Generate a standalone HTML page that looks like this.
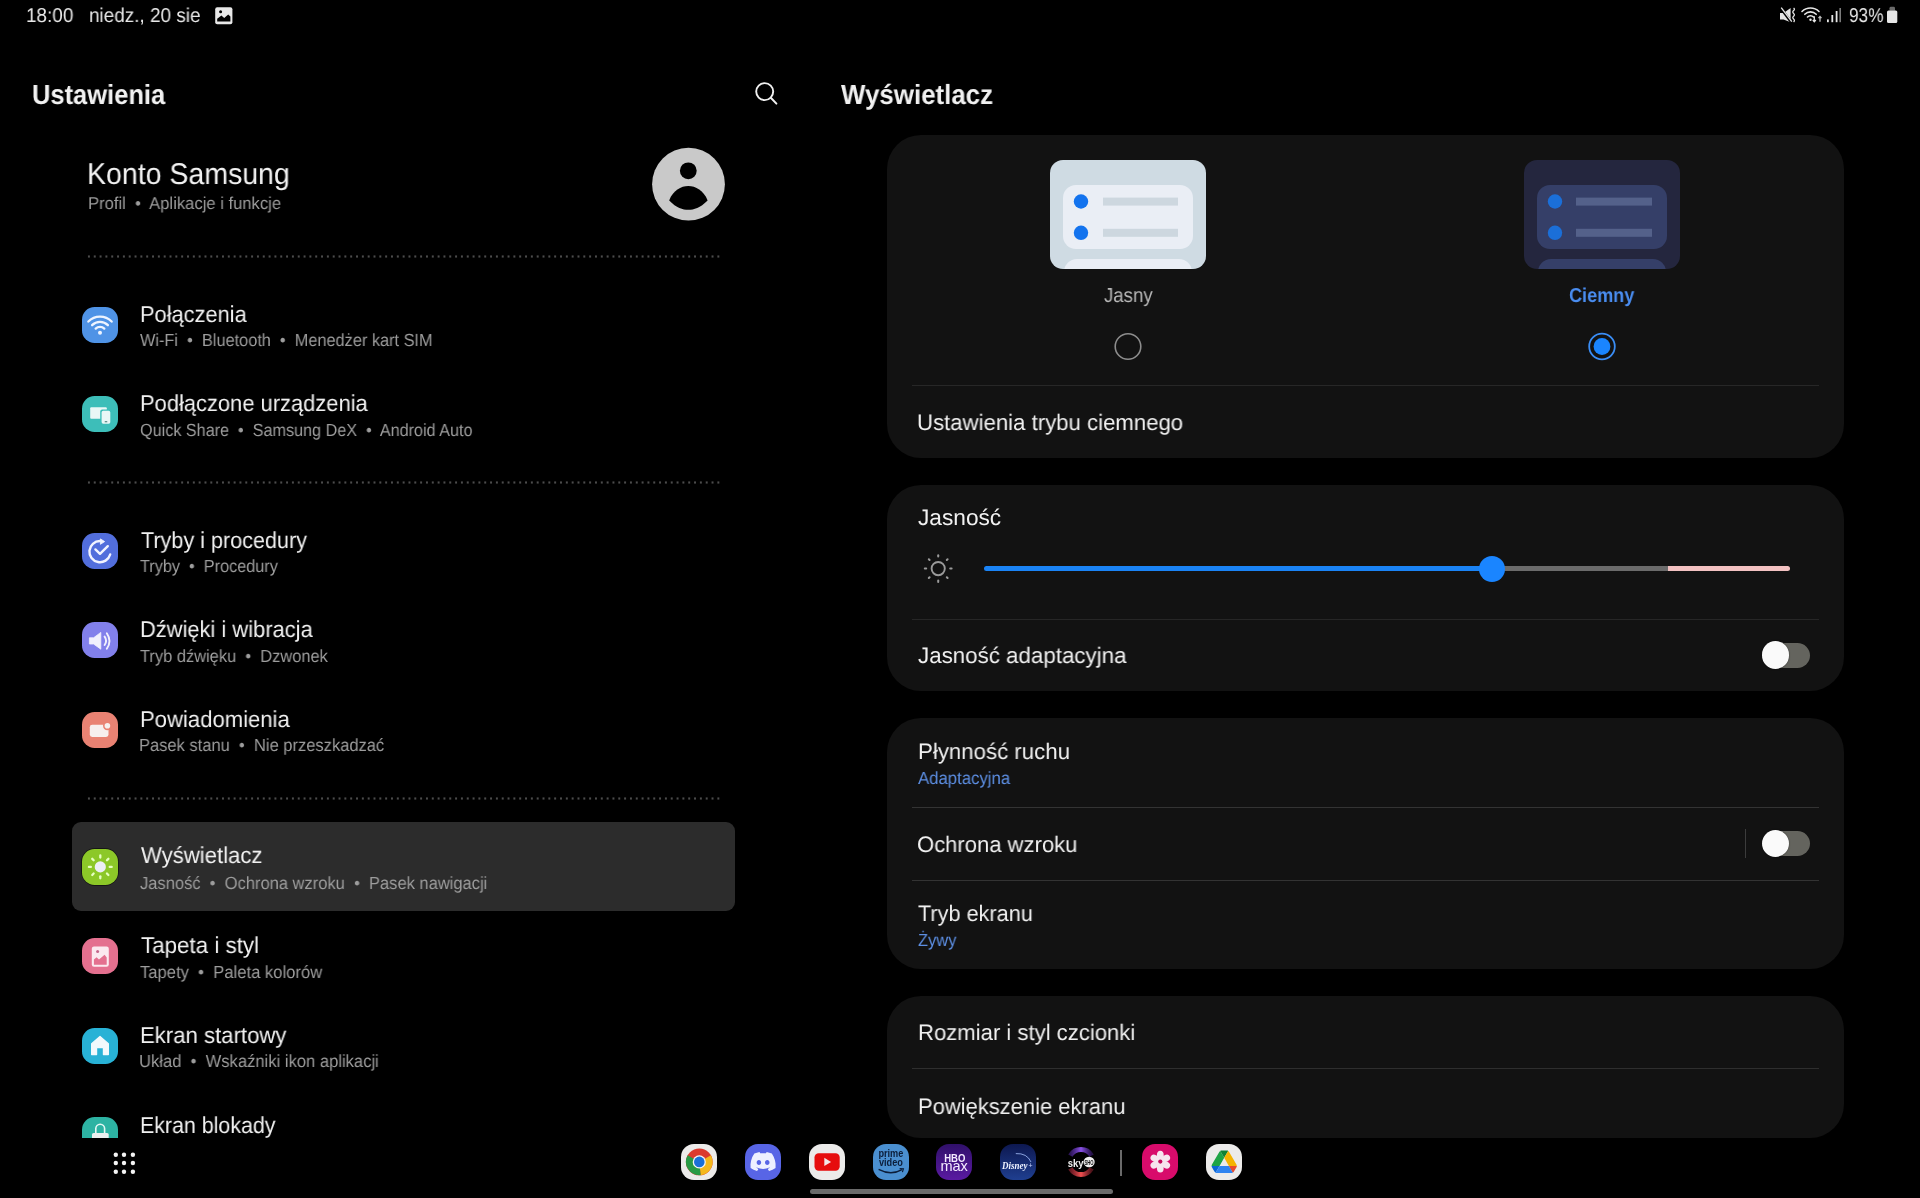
<!DOCTYPE html>
<html><head><meta charset="utf-8">
<style>
html,body{margin:0;padding:0;background:#000;}
body{width:1920px;height:1198px;position:relative;overflow:hidden;font-family:"Liberation Sans",sans-serif;}
.t{position:absolute;white-space:nowrap;transform-origin:0 50%;text-rendering:geometricPrecision;will-change:transform;}
.ic{position:absolute;width:36px;height:36px;border-radius:12.6px;overflow:hidden;}
.ic svg{position:absolute;left:0;top:0;}
.dots{position:absolute;left:86.1px;width:636.6px;height:3px;background-image:radial-gradient(circle,#4c4c4c 0.9px,transparent 1.4px);background-size:5.84px 3px;background-repeat:repeat-x;}
.card{position:absolute;left:886.8px;width:957.4px;background:#121212;border-radius:34px;}
.div{position:absolute;left:912px;width:907.2px;height:1px;background:#2e2e2e;}
</style></head><body>
<!-- highlight -->
<div style="position:absolute;left:72px;top:822px;width:663px;height:89.4px;background:#2c2c2c;border-radius:9px"></div>
<div class="ic" style="left:82px;top:307px;background:#4f93e6;"><svg width="36" height="36" viewBox="0 0 36 36"><g fill="none" stroke="#eef4ff" stroke-width="2.3" stroke-linecap="round"><path d="M6.35 14.55 A16.20 16.20 0 0 1 29.65 14.55"/><path d="M10.09 18.16 A11.00 11.00 0 0 1 25.91 18.16"/><path d="M13.68 21.63 A6.00 6.00 0 0 1 22.32 21.63"/></g><circle cx="18" cy="25.7" r="2" fill="#eef4ff"/></svg></div><div class="ic" style="left:82px;top:396px;background:#3dbeb9;"><svg width="36" height="36" viewBox="0 0 36 36"><rect x="8.2" y="11.2" width="16.6" height="11.6" rx="1" fill="#eaf7f6"/><rect x="18.2" y="13.6" width="11.6" height="15.4" rx="2" fill="#3dbeb9"/><rect x="19.6" y="14.8" width="8.7" height="12.9" rx="1.6" fill="#eaf7f6"/><rect x="22.6" y="25.2" width="2.8" height="1" rx=".5" fill="#3a6f6e"/></svg></div><div class="ic" style="left:82px;top:533px;background:#526edc;"><svg width="36" height="36" viewBox="0 0 36 36"><g fill="none" stroke="#f1f3ff" stroke-width="2.4" stroke-linecap="round" stroke-linejoin="round"><path d="M28.19 21.52 A10.60 10.60 0 1 1 18.00 8.00"/><path d="M13.4 16.4 L18 20.8 L25.8 13.2"/></g><path d="M18.4 5.9 L22.6 8.6 L18.4 11.3 Z" fill="#f1f3ff" stroke="#f1f3ff" stroke-width="0.9" stroke-linejoin="round"/></svg></div><div class="ic" style="left:82px;top:622px;background:#8280eb;"><svg width="36" height="36" viewBox="0 0 36 36"><path d="M7.4 15.8 H11.6 L18.8 10.4 V27.2 L11.6 22 H7.4 Z" fill="#f1f0fd" stroke="#f1f0fd" stroke-width="0.8" stroke-linejoin="round"/><g fill="none" stroke="#f1f0fd" stroke-width="1.9" stroke-linecap="round"><path d="M22.6 14.6 Q25.6 18.8 22.6 23"/><path d="M24.8 11.2 Q30.2 19 24.8 26.8"/></g></svg></div><div class="ic" style="left:82px;top:712px;background:#e98273;"><svg width="36" height="36" viewBox="0 0 36 36"><rect x="7.8" y="12.8" width="18.7" height="12.1" rx="2.4" fill="#f7efee"/><circle cx="25.4" cy="13.8" r="4.4" fill="#e98273"/><circle cx="25.4" cy="13.8" r="2.8" fill="#f7efee"/></svg></div><div style="position:absolute;left:80.6px;top:847.6px;width:38.8px;height:38.8px;border-radius:14.4px;background:#161616"></div><div class="ic" style="left:82px;top:849px;background:#8cc828;"><svg width="36" height="36" viewBox="0 0 36 36"><circle cx="18.3" cy="17.9" r="5.6" fill="#eceef6"/><g stroke="#e6ffc0" stroke-width="2.3" stroke-linecap="round"><path d="M27.70 17.90 L29.70 17.90"/><path d="M24.95 24.55 L26.36 25.96"/><path d="M18.30 27.30 L18.30 29.30"/><path d="M11.65 24.55 L10.24 25.96"/><path d="M8.90 17.90 L6.90 17.90"/><path d="M11.65 11.25 L10.24 9.84"/><path d="M18.30 8.50 L18.30 6.50"/><path d="M24.95 11.25 L26.36 9.84"/></g></svg></div><div class="ic" style="left:82px;top:938px;background:#e4708f;"><svg width="36" height="36" viewBox="0 0 36 36"><rect x="9.8" y="8.6" width="17" height="20.2" rx="2.2" fill="#fbe9ef"/><path d="M11.9 26.7 V21.6 L14.6 19.2 L17 21.4 L22.6 16.8 L24.7 19.4 V26.7 Z" fill="#e4708f"/><circle cx="15.6" cy="13.6" r="1.5" fill="#c4668a"/></svg></div><div class="ic" style="left:82px;top:1028px;background:#28b2d6;"><svg width="36" height="36" viewBox="0 0 36 36"><path d="M9.6 15.8 L18 8.4 L26.4 15.8 V26.6 H21.4 V19.6 H14.6 V26.6 H9.6 Z" fill="#f2f9fc" stroke="#f2f9fc" stroke-width="1.2" stroke-linejoin="round"/></svg></div><div style="position:absolute;left:0;top:0;width:760px;height:1138px;overflow:hidden"><div class="ic" style="left:82px;top:1117px;background:#2db3a3;"><svg width="36" height="36" viewBox="0 0 36 36"><path d="M13.8 16.5 V11.6 A4.4 4.4 0 0 1 22.6 11.6 V16.5" fill="none" stroke="#e4f7f4" stroke-width="1.6"/><rect x="10" y="15.9" width="16.7" height="12" rx="1.6" fill="#ebefef"/></svg></div></div>
<div class="dots" style="top:255.2px"></div><div class="dots" style="top:481.2px"></div><div class="dots" style="top:796.7px"></div>
<!-- avatar -->
<svg style="position:absolute;left:650px;top:146px" width="78" height="78" viewBox="0 0 78 78">
<circle cx="38.5" cy="38.2" r="36.4" fill="#c9c9c9"/>
<circle cx="38.3" cy="24.8" r="8.4" fill="#000"/>
<path d="M19.2 54.4 C23 44.5 31 40.1 38.3 40.1 C45.6 40.1 53.6 44.5 57.6 54.4 C50 62 44 63.7 38.3 63.7 C32.6 63.7 26.6 62 19.2 54.4 Z" fill="#000"/>
</svg>
<!-- search -->
<svg style="position:absolute;left:748.8px;top:76.8px" width="32" height="32" viewBox="0 0 32 32">
<circle cx="15.7" cy="14.6" r="8.5" fill="none" stroke="#f0f0f0" stroke-width="1.9"/>
<path d="M21.8 20.8 L27.4 26.6" stroke="#f0f0f0" stroke-width="2" stroke-linecap="round"/>
</svg>
<!-- status icons -->
<svg style="position:absolute;left:214px;top:6px" width="20" height="20" viewBox="0 0 20 20">
<rect x="1.2" y="1.2" width="17.2" height="17" rx="2" fill="#e8e8e8"/>
<path d="M3.2 15.6 V12.8 L7.4 9.6 L10.2 12 L14.2 8.6 L16.4 10.6 V15.6 Z" fill="#000"/>
<circle cx="6.6" cy="5.8" r="1.5" fill="#000"/>
</svg>
<svg style="position:absolute;left:1778px;top:6px" width="120" height="20" viewBox="0 0 120 20">
<path d="M2 7 H5.6 L12.6 2 V16.2 L5.6 13.6 H2 Z" fill="#e6e6e6"/>
<path d="M2.2 1.4 L13.4 16.4" stroke="#000" stroke-width="2.6"/><path d="M3.2 1.6 L13.8 15.6" stroke="#e6e6e6" stroke-width="1.3"/>
<path d="M15.6 2 Q17.2 3.2 15.6 4.6 Q14 6 15.6 7.4 Q17.2 8.8 15.6 10.2 Q14 11.6 15.6 13 Q17.2 14.4 15.6 16" fill="none" stroke="#e6e6e6" stroke-width="1.3"/>
<g fill="none" stroke="#e6e6e6" stroke-width="1.6" stroke-linecap="round"><path d="M24 5.5 A12 12 0 0 1 41 5.5"/><path d="M26.8 8.3 A8 8 0 0 1 38.2 8.3"/><path d="M29.5 11 A4.2 4.2 0 0 1 35.5 11"/></g>
<circle cx="32.5" cy="13.8" r="1.2" fill="#e6e6e6"/>
<path d="M36.3 10.2 V15.6 M34.8 14 L36.3 15.8 L37.8 14" stroke="#e6e6e6" stroke-width="1.3" fill="none"/>
<path d="M42 15.8 V10.6 M40.5 12.2 L42 10.4 L43.5 12.2" stroke="#bdbdbd" stroke-width="1.3" fill="none"/>
<rect x="49" y="13.4" width="1.8" height="2.8" fill="#e6e6e6"/><rect x="53.4" y="9" width="1.8" height="7.2" fill="#e6e6e6"/><rect x="57.7" y="5" width="1.8" height="11.2" fill="#e6e6e6"/><rect x="61.5" y="2" width="1.3" height="14.2" fill="#9a9a9a"/>
<path d="M111.5 4.8 V2.2 Q111.5 0.8 113 0.8 H115.6 Q117 0.8 117 2.2 V4.8 Z" fill="#6a6a6a"/>
<rect x="109" y="4.6" width="10.3" height="12.4" rx="1.5" fill="#e6e6e6"/>
</svg>

<!-- cards -->
<div class="card" style="top:135px;height:323px"></div>
<div class="card" style="top:484.5px;height:206px"></div>
<div class="card" style="top:717.5px;height:251px"></div>
<div class="card" style="top:996px;height:142px"></div>
<div class="div" style="top:385px;background:#272727"></div>
<div class="div" style="top:618.5px;background:#262626"></div>
<div class="div" style="top:807px;background:#333"></div>
<div class="div" style="top:880px;background:#333"></div>
<div class="div" style="top:1068px"></div>

<!-- theme previews -->
<svg style="position:absolute;left:1050px;top:160px" width="156" height="109" viewBox="0 0 156 109">
<defs><clipPath id="cl1"><rect x="0" y="0" width="156" height="109" rx="13"/></clipPath></defs>
<g clip-path="url(#cl1)">
<rect x="0" y="0" width="156" height="109" fill="#cfdbe3"/>
<rect x="13" y="25" width="130" height="64" rx="13" fill="#eaeef5"/>
<circle cx="31" cy="41.5" r="7.2" fill="#1373ee"/>
<circle cx="31" cy="72.8" r="7.2" fill="#1373ee"/>
<rect x="53" y="37.6" width="75" height="8" fill="#cdd7df"/>
<rect x="53" y="68.8" width="75" height="8" fill="#cdd7df"/>
<rect x="14" y="99" width="128" height="30" rx="13" fill="#eaeef5"/>
</g></svg>
<svg style="position:absolute;left:1524px;top:160px" width="156" height="109" viewBox="0 0 156 109">
<defs><clipPath id="cl2"><rect x="0" y="0" width="156" height="109" rx="13"/></clipPath></defs>
<g clip-path="url(#cl2)">
<rect x="0" y="0" width="156" height="109" fill="#24263e"/>
<rect x="13" y="25" width="130" height="64" rx="13" fill="#353f68"/>
<circle cx="31" cy="41.5" r="7.2" fill="#1b6fd8"/>
<circle cx="31" cy="72.8" r="7.2" fill="#1b6fd8"/>
<rect x="52" y="37.6" width="76" height="8" fill="#54618a"/>
<rect x="52" y="68.8" width="76" height="8" fill="#54618a"/>
<rect x="14" y="99" width="128" height="30" rx="13" fill="#353f68"/>
</g></svg>
<!-- radios -->
<svg style="position:absolute;left:1110px;top:328px" width="36" height="36"><circle cx="18" cy="18.5" r="12.8" fill="none" stroke="#8d8d8d" stroke-width="1.6"/></svg>
<svg style="position:absolute;left:1584px;top:328px" width="36" height="36"><circle cx="18" cy="18.5" r="12.8" fill="none" stroke="#3a8df5" stroke-width="1.8"/><circle cx="18" cy="18.5" r="8.4" fill="#1a85ff"/></svg>

<!-- brightness -->
<svg style="position:absolute;left:918px;top:548px" width="42" height="42" viewBox="0 0 42 42">
<circle cx="20.2" cy="20.6" r="6.6" fill="none" stroke="#9a9a9a" stroke-width="1.9"/>
<g stroke="#9a9a9a" stroke-width="2" stroke-linecap="round">
<path d="M20.2 7.2 V8.6"/><path d="M20.2 32.6 V34"/><path d="M6.8 20.6 H8.2"/><path d="M32.2 20.6 H33.6"/>
<path d="M10.8 11.2 L11.6 12"/><path d="M28.8 29.2 L29.6 30"/><path d="M10.8 30 L11.6 29.2"/><path d="M28.8 12 L29.6 11.2"/>
</g></svg>
<div style="position:absolute;left:983.5px;top:566px;width:510px;height:5px;background:#1a83f5;border-radius:3px"></div>
<div style="position:absolute;left:1490px;top:566px;width:178px;height:5px;background:#6b6b6b"></div>
<div style="position:absolute;left:1667.5px;top:566px;width:122px;height:5px;background:#f2c1c1;border-radius:0 3px 3px 0"></div>
<div style="position:absolute;left:1479px;top:555.6px;width:26px;height:26px;border-radius:50%;background:#1a85ff"></div>

<!-- toggles -->
<div style="position:absolute;left:1766px;top:642.5px;width:44px;height:25px;border-radius:13px;background:#64645e"></div>
<div style="position:absolute;left:1761.8px;top:641.3px;width:27.5px;height:27.5px;border-radius:50%;background:#fafafa;box-shadow:0 0 1.5px rgba(0,0,0,.6)"></div>
<div style="position:absolute;left:1745px;top:828.5px;width:1.2px;height:29.6px;background:#3c3c3c"></div>
<div style="position:absolute;left:1764px;top:831px;width:46px;height:24.5px;border-radius:13px;background:#64645e"></div>
<div style="position:absolute;left:1761.5px;top:829.5px;width:27.5px;height:27.5px;border-radius:50%;background:#fafafa;box-shadow:0 0 1.5px rgba(0,0,0,.6)"></div>

<div class="t" style="left:26.35px;top:6.27px;font-size:20.00px;line-height:20.00px;color:#e8e8e8;font-weight:400;transform:scaleX(0.9463);">18:00</div>
<div class="t" style="left:88.55px;top:6.27px;font-size:20.00px;line-height:20.00px;color:#e8e8e8;font-weight:400;transform:scaleX(0.9466);">niedz., 20 sie</div>
<div class="t" style="left:1848.70px;top:6.47px;font-size:20.00px;line-height:20.00px;color:#e8e8e8;font-weight:400;transform:scaleX(0.8622);">93%</div>
<div class="t" style="left:31.58px;top:81.35px;font-size:27.70px;line-height:27.70px;color:#f1f1f1;font-weight:700;transform:scaleX(0.9207);">Ustawienia</div>
<div class="t" style="left:86.80px;top:160.31px;font-size:30.00px;line-height:30.00px;color:#f1f1f1;font-weight:400;transform:scaleX(0.9500);">Konto Samsung</div>
<div class="t" style="left:87.53px;top:195.14px;font-size:17.20px;line-height:17.20px;color:#9d9d9d;font-weight:400;transform:scaleX(0.9657);">Profil&nbsp; •&nbsp; Aplikacje i funkcje</div>
<div class="t" style="left:139.55px;top:303.33px;font-size:23.00px;line-height:23.00px;color:#f1f1f1;font-weight:400;transform:scaleX(0.9487);">Połączenia</div>
<div class="t" style="left:140.00px;top:331.60px;font-size:17.60px;line-height:17.60px;color:#9d9d9d;font-weight:400;transform:scaleX(0.9277);">Wi-Fi&nbsp; •&nbsp; Bluetooth&nbsp; •&nbsp; Menedżer kart SIM</div>
<div class="t" style="left:139.55px;top:392.13px;font-size:23.00px;line-height:23.00px;color:#f1f1f1;font-weight:400;transform:scaleX(0.9525);">Podłączone urządzenia</div>
<div class="t" style="left:140.00px;top:421.70px;font-size:17.60px;line-height:17.60px;color:#9d9d9d;font-weight:400;transform:scaleX(0.9199);">Quick Share&nbsp; •&nbsp; Samsung DeX&nbsp; •&nbsp; Android Auto</div>
<div class="t" style="left:140.50px;top:529.13px;font-size:23.00px;line-height:23.00px;color:#f1f1f1;font-weight:400;transform:scaleX(0.9390);">Tryby i procedury</div>
<div class="t" style="left:140.00px;top:557.50px;font-size:17.60px;line-height:17.60px;color:#9d9d9d;font-weight:400;transform:scaleX(0.9235);">Tryby&nbsp; •&nbsp; Procedury</div>
<div class="t" style="left:139.55px;top:617.93px;font-size:23.00px;line-height:23.00px;color:#f1f1f1;font-weight:400;transform:scaleX(0.9519);">Dźwięki i wibracja</div>
<div class="t" style="left:140.00px;top:648.10px;font-size:17.60px;line-height:17.60px;color:#9d9d9d;font-weight:400;transform:scaleX(0.9341);">Tryb dźwięku&nbsp; •&nbsp; Dzwonek</div>
<div class="t" style="left:139.54px;top:707.53px;font-size:23.00px;line-height:23.00px;color:#f1f1f1;font-weight:400;transform:scaleX(0.9601);">Powiadomienia</div>
<div class="t" style="left:139.06px;top:736.70px;font-size:17.60px;line-height:17.60px;color:#9d9d9d;font-weight:400;transform:scaleX(0.9382);">Pasek stanu&nbsp; •&nbsp; Nie przeszkadzać</div>
<div class="t" style="left:140.50px;top:844.23px;font-size:23.00px;line-height:23.00px;color:#f1f1f1;font-weight:400;transform:scaleX(0.9618);">Wyświetlacz</div>
<div class="t" style="left:140.00px;top:874.70px;font-size:17.60px;line-height:17.60px;color:#9d9d9d;font-weight:400;transform:scaleX(0.9382);">Jasność&nbsp; •&nbsp; Ochrona wzroku&nbsp; •&nbsp; Pasek nawigacji</div>
<div class="t" style="left:140.50px;top:933.93px;font-size:23.00px;line-height:23.00px;color:#f1f1f1;font-weight:400;transform:scaleX(0.9723);">Tapeta i styl</div>
<div class="t" style="left:140.00px;top:964.10px;font-size:17.60px;line-height:17.60px;color:#9d9d9d;font-weight:400;transform:scaleX(0.9444);">Tapety&nbsp; •&nbsp; Paleta kolorów</div>
<div class="t" style="left:139.54px;top:1023.63px;font-size:23.00px;line-height:23.00px;color:#f1f1f1;font-weight:400;transform:scaleX(0.9630);">Ekran startowy</div>
<div class="t" style="left:139.06px;top:1052.80px;font-size:17.60px;line-height:17.60px;color:#9d9d9d;font-weight:400;transform:scaleX(0.9422);">Układ&nbsp; •&nbsp; Wskaźniki ikon aplikacji</div>
<div class="t" style="left:139.57px;top:1114.33px;font-size:23.00px;line-height:23.00px;color:#f1f1f1;font-weight:400;transform:scaleX(0.9294);">Ekran blokady</div>
<div class="t" style="left:840.60px;top:81.35px;font-size:27.70px;line-height:27.70px;color:#f1f1f1;font-weight:700;transform:scaleX(0.9353);">Wyświetlacz</div>
<div class="t" style="left:1103.60px;top:285.90px;font-size:20.20px;line-height:20.20px;color:#b9b9b9;font-weight:400;transform:scaleX(0.9209);">Jasny</div>
<div class="t" style="left:1569.40px;top:285.90px;font-size:20.20px;line-height:20.20px;color:#4a8df0;font-weight:700;transform:scaleX(0.8956);">Ciemny</div>
<div class="t" style="left:917.31px;top:412.04px;font-size:22.40px;line-height:22.40px;color:#f1f1f1;font-weight:400;transform:scaleX(0.9900);">Ustawienia trybu ciemnego</div>
<div class="t" style="left:918.00px;top:506.54px;font-size:22.40px;line-height:22.40px;color:#f1f1f1;font-weight:400;transform:scaleX(1.0129);">Jasność</div>
<div class="t" style="left:918.00px;top:645.04px;font-size:22.40px;line-height:22.40px;color:#f1f1f1;font-weight:400;transform:scaleX(0.9968);">Jasność adaptacyjna</div>
<div class="t" style="left:917.51px;top:740.84px;font-size:22.40px;line-height:22.40px;color:#f1f1f1;font-weight:400;transform:scaleX(0.9925);">Płynność ruchu</div>
<div class="t" style="left:918.00px;top:769.70px;font-size:17.60px;line-height:17.60px;color:#5d8fe3;font-weight:400;transform:scaleX(0.9521);">Adaptacyjna</div>
<div class="t" style="left:917.02px;top:834.04px;font-size:22.40px;line-height:22.40px;color:#f1f1f1;font-weight:400;transform:scaleX(0.9840);">Ochrona wzroku</div>
<div class="t" style="left:918.00px;top:903.44px;font-size:22.40px;line-height:22.40px;color:#f1f1f1;font-weight:400;transform:scaleX(0.9677);">Tryb ekranu</div>
<div class="t" style="left:918.00px;top:931.70px;font-size:17.60px;line-height:17.60px;color:#5d8fe3;font-weight:400;transform:scaleX(0.9358);">Żywy</div>
<div class="t" style="left:917.51px;top:1022.44px;font-size:22.40px;line-height:22.40px;color:#f1f1f1;font-weight:400;transform:scaleX(0.9865);">Rozmiar i styl czcionki</div>
<div class="t" style="left:917.52px;top:1095.64px;font-size:22.40px;line-height:22.40px;color:#f1f1f1;font-weight:400;transform:scaleX(0.9802);">Powiększenie ekranu</div>

<!-- dock -->
<svg style="position:absolute;left:110px;top:1150px" width="28" height="28"><circle cx="5.8" cy="4.7" r="2.2" fill="#f4f4f4"/><circle cx="5.8" cy="13.0" r="2.2" fill="#f4f4f4"/><circle cx="5.8" cy="21.7" r="2.2" fill="#f4f4f4"/><circle cx="14.0" cy="4.7" r="2.2" fill="#f4f4f4"/><circle cx="14.0" cy="13.0" r="2.2" fill="#f4f4f4"/><circle cx="14.0" cy="21.7" r="2.2" fill="#f4f4f4"/><circle cx="22.9" cy="4.7" r="2.2" fill="#f4f4f4"/><circle cx="22.9" cy="13.0" r="2.2" fill="#f4f4f4"/><circle cx="22.9" cy="21.7" r="2.2" fill="#f4f4f4"/></svg><div style="position:absolute;left:681.0px;top:1144px;width:36px;height:36px;border-radius:13px;background:#ecebea;overflow:hidden;will-change:transform"><svg width="36" height="36" viewBox="0 0 36 36"><circle cx="18.3" cy="17.9" r="13.4" fill="#db3a2e"/><path d="M18.3 17.9 L29.9 11.2 A13.4 13.4 0 0 1 19.6 31.2 Z" fill="#f5b81c"/><path d="M18.3 17.9 L19.6 31.2 A13.4 13.4 0 0 1 6.7 11.2 Z" fill="#279a45"/><circle cx="18.3" cy="17.9" r="6.6" fill="#f4f4f4"/><circle cx="18.3" cy="17.9" r="5.3" fill="#1a6fd8"/></svg></div><div style="position:absolute;left:745.0px;top:1144px;width:36px;height:36px;border-radius:13px;background:#5865e6;overflow:hidden;will-change:transform"><svg width="36" height="36" viewBox="0 0 36 36"><g transform="translate(5.5 8) scale(0.198)"><path fill="#eef0ff" fill-rule="evenodd" d="M107.7,8.07A105.15,105.15,0,0,0,81.47,0a72.06,72.06,0,0,0-3.36,6.830A97.68,97.68,0,0,0,49,6.83,72.37,72.37,0,0,0,45.64,0,105.89,105.89,0,0,0,19.39,8.09C2.79,32.65-1.71,56.6.54,80.21A105.73,105.73,0,0,0,32.71,96.36,77.7,77.7,0,0,0,39.6,85.25a68.42,68.42,0,0,1-10.85-5.18c.91-.66,1.8-1.34,2.66-2a75.57,75.57,0,0,0,64.32,0c.87.71,1.76,1.39,2.66,2a68.68,68.68,0,0,1-10.87,5.19,77,77,0,0,0,6.89,11.1A105.25,105.25,0,0,0,126.6,80.22C129.24,52.840,122.09,29.11,107.7,8.07ZM42.45,65.69C36.18,65.69,31,60,31,53s5-12.74,11.43-12.74S54,46,53.89,53,48.84,65.69,42.45,65.69Zm42.24,0C78.41,65.69,73.25,60,73.25,53s5-12.74,11.44-12.74S96.23,46,96.12,53,91.08,65.69,84.69,65.69Z"/></g></svg></div><div style="position:absolute;left:808.5px;top:1144px;width:36px;height:36px;border-radius:13px;background:#ecebea;overflow:hidden;will-change:transform"><svg width="36" height="36" viewBox="0 0 36 36"><rect x="5.5" y="9.2" width="25.2" height="17.5" rx="4.2" fill="#e60d0d"/><path d="M15.3 13.8 L22.1 17.9 L15.3 22 Z" fill="#f3e6e6"/></svg></div><div style="position:absolute;left:872.5px;top:1144px;width:36px;height:36px;border-radius:13px;background:#4a8fd0;overflow:hidden;will-change:transform"><svg width="36" height="36" viewBox="0 0 36 36"><text x="5.4" y="13" textLength="25" lengthAdjust="spacingAndGlyphs" font-family="Liberation Sans" font-weight="700" font-size="10" fill="#0c1e3a">prime</text><text x="5.9" y="22.4" textLength="24" lengthAdjust="spacingAndGlyphs" font-family="Liberation Sans" font-weight="700" font-size="10" fill="#0c1e3a">video</text><path d="M5.6 25.4 Q18 32 29 25.6" fill="none" stroke="#0c1e3a" stroke-width="1.3"/><path d="M26.6 24.6 L30.4 24.8 L29.4 28.2" fill="none" stroke="#0c1e3a" stroke-width="1.2"/></svg></div><div style="position:absolute;left:935.6px;top:1144px;width:36px;height:36px;border-radius:13px;background:linear-gradient(#30106a,#5a1aa2);overflow:hidden;will-change:transform"><svg width="36" height="36" viewBox="0 0 36 36"><text x="8.2" y="17.5" textLength="21.2" lengthAdjust="spacingAndGlyphs" font-family="Liberation Sans" font-weight="700" font-size="11.6" fill="#f4ecff">HBO</text><text x="4.4" y="27" textLength="27.5" lengthAdjust="spacingAndGlyphs" font-family="Liberation Sans" font-size="15" fill="#f4ecff">max</text></svg></div><div style="position:absolute;left:1000.0px;top:1144px;width:36px;height:36px;border-radius:13px;background:linear-gradient(#0d1850,#1f3f90);overflow:hidden;will-change:transform"><svg width="36" height="36" viewBox="0 0 36 36"><path d="M15.8 9.6 Q27 9 31 18" fill="none" stroke="#a9c4ff" stroke-width="0.8"/><text x="2" y="24.8" textLength="25.4" lengthAdjust="spacingAndGlyphs" font-family="Liberation Serif" font-style="italic" font-weight="700" font-size="11" fill="#eef2ff">Disney</text><text x="28.6" y="23.6" font-family="Liberation Sans" font-size="7" fill="#c9d6ff">+</text></svg></div><svg style="position:absolute;left:1063px;top:1144px;will-change:transform" width="36" height="36" viewBox="0 0 36 36"><defs><linearGradient id="gp" x1="0" x2="1"><stop offset="0" stop-color="#5a2bb0" stop-opacity=".5"/><stop offset=".5" stop-color="#8a52e6"/><stop offset="1" stop-color="#5a2bb0" stop-opacity=".4"/></linearGradient><linearGradient id="gr" x1="0" x2="1"><stop offset="0" stop-color="#c23040" stop-opacity=".5"/><stop offset=".5" stop-color="#f05050"/><stop offset="1" stop-color="#c23040" stop-opacity=".4"/></linearGradient></defs><path d="M7.35 11.65 A12.30 12.30 0 0 1 28.65 11.65" fill="none" stroke="url(#gp)" stroke-width="4.8"/><path d="M28.65 24.35 A12.30 12.30 0 0 1 7.35 24.35" fill="none" stroke="url(#gr)" stroke-width="4.8"/><text x="4.7" y="22.6" textLength="15.8" lengthAdjust="spacingAndGlyphs" font-family="Liberation Sans" font-weight="700" font-size="11" fill="#f2f2f2">sky</text><ellipse cx="26.1" cy="18.05" rx="5.6" ry="5.3" fill="#eeeeee"/><text x="26.1" y="20.8" text-anchor="middle" textLength="9" lengthAdjust="spacingAndGlyphs" font-family="Liberation Sans" font-weight="700" font-size="7.6" fill="#111">SHO</text></svg><div style="position:absolute;left:1120px;top:1149.8px;width:2.2px;height:26.6px;background:#6a6a6a"></div><div style="position:absolute;left:1142.0px;top:1144px;width:36px;height:36px;border-radius:13px;background:#d80b6b;overflow:hidden;will-change:transform"><svg width="36" height="36" viewBox="0 0 36 36"><g fill="#f6e4ee"><ellipse cx="18.3" cy="11.2" rx="3.4" ry="4.5" transform="rotate(0 18.3 17.6)"/><ellipse cx="18.3" cy="11.2" rx="3.4" ry="4.5" transform="rotate(60 18.3 17.6)"/><ellipse cx="18.3" cy="11.2" rx="3.4" ry="4.5" transform="rotate(120 18.3 17.6)"/><ellipse cx="18.3" cy="11.2" rx="3.4" ry="4.5" transform="rotate(180 18.3 17.6)"/><ellipse cx="18.3" cy="11.2" rx="3.4" ry="4.5" transform="rotate(240 18.3 17.6)"/><ellipse cx="18.3" cy="11.2" rx="3.4" ry="4.5" transform="rotate(300 18.3 17.6)"/></g><circle cx="18.3" cy="17.6" r="3.6" fill="#f6e4ee"/><circle cx="18.3" cy="17.6" r="2.1" fill="#c40a5c"/></svg></div><div style="position:absolute;left:1206.0px;top:1144px;width:36px;height:36px;border-radius:13px;background:#ecebea;overflow:hidden;will-change:transform"><svg width="36" height="36" viewBox="0 0 36 36"><g transform="translate(5.6 6.6) scale(0.2887)"><path d="m6.6 66.85 3.85 6.65c.8 1.4 1.95 2.5 3.3 3.3l13.75-23.8h-27.5c0 1.55.4 3.1 1.2 4.5z" fill="#0b66d6"/><path d="m43.65 25-13.75-23.8c-1.35.8-2.5 1.9-3.3 3.3l-25.4 44a9.06 9.06 0 0 0 -1.2 4.5h27.5z" fill="#1ea446"/><path d="m73.55 76.8c1.35-.8 2.5-1.9 3.3-3.3l1.6-2.75 7.65-13.25c.8-1.4 1.2-2.95 1.2-4.5h-27.502l5.852 11.5z" fill="#e94a2c"/><path d="m43.65 25 13.75-23.8c-1.35-.8-2.9-1.2-4.5-1.2h-18.5c-1.6 0-3.15.45-4.5 1.2z" fill="#0f8234"/><path d="m59.8 53h-32.3l-13.75 23.8c1.35.8 2.9 1.2 4.5 1.2h50.8c1.6 0 3.15-.45 4.5-1.2z" fill="#2f84f0"/><path d="m73.4 26.5-12.7-22c-.8-1.4-1.950-2.5-3.3-3.3l-13.75 23.8 16.15 28h27.45c0-1.55-.4-3.1-1.2-4.5z" fill="#f5b400"/></g></svg></div><div style="position:absolute;left:810px;top:1188.9px;width:303px;height:5.2px;border-radius:3px;background:#6a6a6a"></div>
</body></html>
